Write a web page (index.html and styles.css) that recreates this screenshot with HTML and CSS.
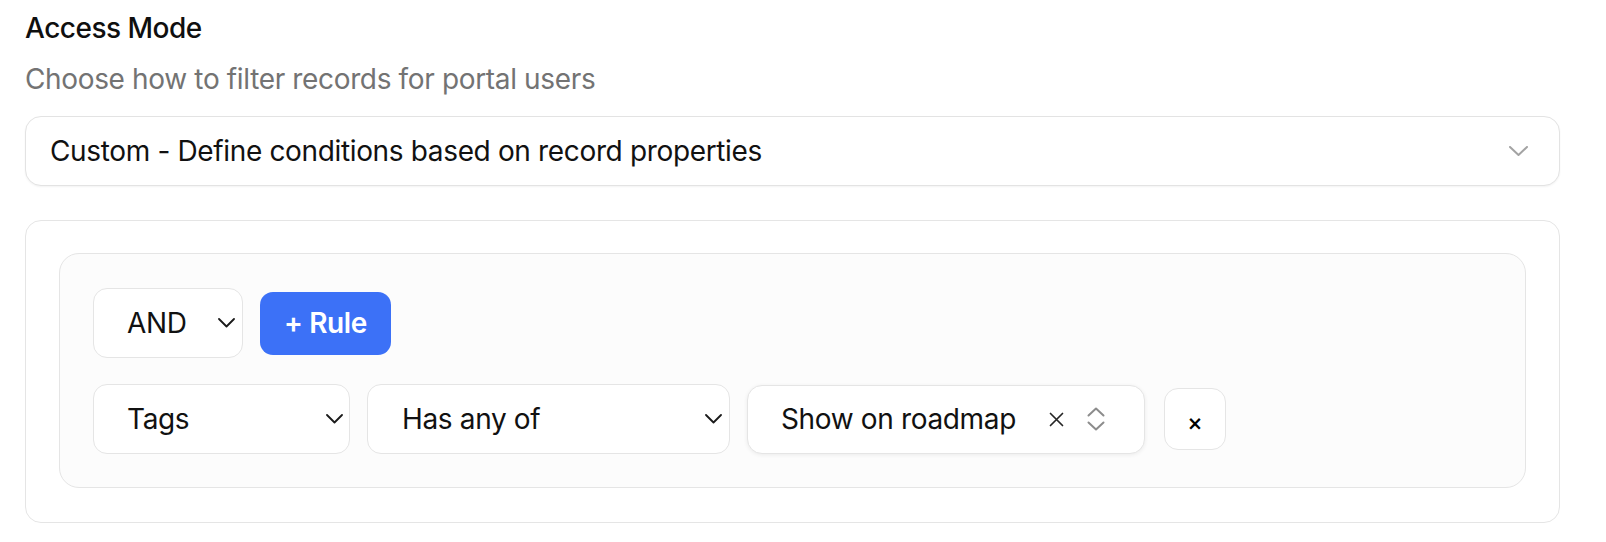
FILE: index.html
```html
<!DOCTYPE html>
<html lang="en">
<head>
<meta charset="utf-8">
<title>Access Mode</title>
<link rel="stylesheet" href="styles.css">
</head>
<body>
<div class="page">
  <div class="field-title">Access Mode</div>
  <div class="field-help">Choose how to filter records for portal users</div>
  <div class="mode-select">
    <span>Custom - Define conditions based on record properties</span>
    <svg class="chev-lg" width="19" height="10" viewBox="0 0 19 10"><polyline points="1,1 9.5,9 18,1" fill="none" stroke="#a3a3a3" stroke-width="2" stroke-linecap="round" stroke-linejoin="round"/></svg>
  </div>
  <div class="card">
    <div class="group">
      <div class="row row-top">
        <div class="select sel-and">
          <span>AND</span>
          <svg width="17" height="10" viewBox="0 0 17 10"><polyline points="1,1 8.5,8.5 16,1" fill="none" stroke="#1a1a1a" stroke-width="1.8" stroke-linecap="round" stroke-linejoin="round"/></svg>
        </div>
        <button class="btn-rule">+ Rule</button>
      </div>
      <div class="row row-rule">
        <div class="select sel-field">
          <span>Tags</span>
          <svg width="17" height="10" viewBox="0 0 17 10"><polyline points="1,1 8.5,8.5 16,1" fill="none" stroke="#1a1a1a" stroke-width="1.8" stroke-linecap="round" stroke-linejoin="round"/></svg>
        </div>
        <div class="select sel-op">
          <span>Has any of</span>
          <svg width="17" height="10" viewBox="0 0 17 10"><polyline points="1,1 8.5,8.5 16,1" fill="none" stroke="#1a1a1a" stroke-width="1.8" stroke-linecap="round" stroke-linejoin="round"/></svg>
        </div>
        <div class="combo">
          <span class="combo-value">Show on roadmap</span>
          <svg class="combo-clear" width="15" height="15" viewBox="0 0 15 15"><path d="M1.5 1.5 L13.5 13.5 M13.5 1.5 L1.5 13.5" fill="none" stroke="#262626" stroke-width="1.7" stroke-linecap="round"/></svg>
          <svg class="combo-updown" width="18" height="24" viewBox="0 0 18 24"><polyline points="1.5,8.5 9,1.5 16.5,8.5" fill="none" stroke="#8c8c8c" stroke-width="2" stroke-linecap="round" stroke-linejoin="round"/><polyline points="1.5,15.5 9,22.5 16.5,15.5" fill="none" stroke="#8c8c8c" stroke-width="2" stroke-linecap="round" stroke-linejoin="round"/></svg>
        </div>
        <button class="btn-remove">×</button>
      </div>
    </div>
  </div>
</div>
</body>
</html>
```
FILE: styles.css
```css
* { box-sizing: border-box; }
html, body { margin: 0; padding: 0; background: #ffffff; }
body {
  font-family: Inter, "Noto Sans", "Liberation Sans", sans-serif;
  font-size: 28px;
  line-height: 40px;
  letter-spacing: -0.35px;
  color: #111111;
}
.page {
  width: 1535px;
  margin-left: 25px;
  padding-top: 8px;
}
.field-title {
  font-weight: 500;
  letter-spacing: -0.5px;
  color: #0f0f0f;
}
.field-help {
  margin-top: 11px;
  color: #737373;
}
.mode-select {
  margin-top: 17px;
  height: 70px;
  border: 1px solid #e3e3e3;
  border-radius: 16px;
  background: #fff;
  box-shadow: 0 1px 2px rgba(0,0,0,0.05);
  display: flex;
  align-items: center;
  justify-content: space-between;
  padding: 0 31px 0 24px;
}
.chev-lg { display: block; }
.card {
  margin-top: 34px;
  border: 1px solid #e5e5e5;
  border-radius: 16px;
  padding: 32px 33px 34px 33px;
  background: #fff;
}
.group {
  border: 1px solid #e5e5e5;
  border-radius: 20px;
  background: #fcfcfc;
  padding: 34px 33px 33px 33px;
}
.row {
  display: flex;
  align-items: center;
}
.row-top { gap: 17px; }
.row-rule { margin-top: 26px; gap: 17px; }
.select {
  height: 70px;
  background: #fff;
  border: 1px solid #e5e5e5;
  border-radius: 14px;
  display: flex;
  align-items: center;
  justify-content: space-between;
  padding: 0 7px 0 33px;
}
.select svg { display: block; }
.sel-and { width: 150px; }
.sel-field { width: 257px; padding-right: 6px; }
.sel-op { width: 363px; padding-left: 34px; }
.btn-rule {
  width: 131px;
  height: 63px;
  border: none;
  border-radius: 13px;
  background: #3c71f7;
  color: #ffffff;
  font-family: inherit;
  font-size: 28px;
  font-weight: 600;
  letter-spacing: -0.35px;
  padding: 0;
  line-height: 40px;
}
.combo {
  width: 398px;
  height: 69px;
  background: #fff;
  border: 1px solid #e5e5e5;
  border-radius: 15px;
  box-shadow: 0 1px 4px rgba(0,0,0,0.07);
  display: flex;
  align-items: center;
  padding: 0 0 0 33px;
}
.combo-value { flex: 1; }
.combo-clear { display: block; margin-right: 23px; }
.combo-updown { display: block; margin-right: 39px; }
.btn-remove {
  width: 62px;
  height: 62px;
  margin-left: 2px;
  border: 1px solid #e5e5e5;
  border-radius: 14px;
  background: #fff;
  color: #000;
  font-family: "DejaVu Sans", sans-serif;
  font-weight: 700;
  font-size: 19px;
  line-height: 20px;
  letter-spacing: 0;
  padding: 8px 0 0 0;
}
```
